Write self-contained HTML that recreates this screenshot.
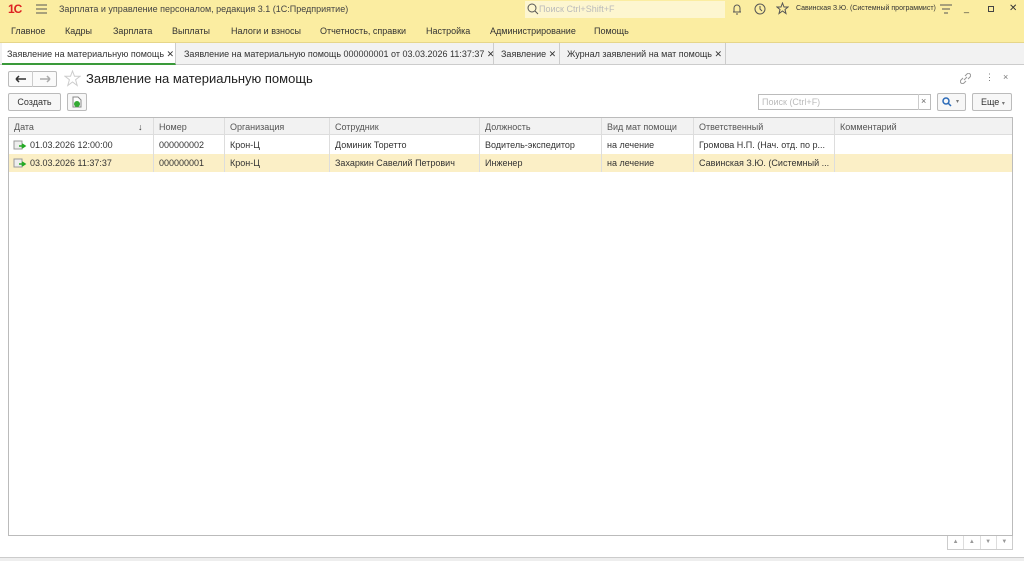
<!DOCTYPE html>
<html><head><meta charset="utf-8"><style>
*{box-sizing:border-box;margin:0;padding:0}
body{width:1024px;height:561px;overflow:hidden;background:#fff;font-family:"Liberation Sans",sans-serif;font-size:9px;color:#333;position:relative}
.a{position:absolute;white-space:nowrap}
svg{position:absolute}
</style></head><body>
<div class="a" style="left:0;top:0;width:1024px;height:19px;background:#fbeda1"></div>
<div class="a" style="left:8px;top:2px;color:#d22;font-weight:bold;font-size:12px;letter-spacing:-1px">1С</div>
<svg style="left:36px;top:4px" width="12" height="10"><path d="M0 1H11M0 5H11M0 9H11" stroke="#555" stroke-width="1"/></svg>
<div class="a" style="left:59px;top:4px;color:#444">Зарплата и управление персоналом, редакция 3.1  (1С:Предприятие)</div>
<div class="a" style="left:525px;top:1px;width:200px;height:17px;background:#fdf6d0"></div>
<div class="a" style="left:539px;top:4px;color:#bbb">Поиск Ctrl+Shift+F</div>
<svg style="left:527px;top:3px" width="12" height="12"><circle cx="5" cy="5" r="4" fill="none" stroke="#555"/><path d="M8 8L11 11" stroke="#555"/></svg>
<svg style="left:731px;top:3px" width="12" height="12"><path d="M2 9H10M3 9V5A3 3 0 0 1 9 5V9M5 11H7" fill="none" stroke="#555"/></svg>
<svg style="left:754px;top:3px" width="12" height="12"><circle cx="6" cy="6" r="5" fill="none" stroke="#555"/><path d="M6 3V6L8 8" fill="none" stroke="#555"/></svg>
<svg style="left:776px;top:2px" width="13" height="13"><path d="M6.5 1L8 5H12L9 7.5L10 11.5L6.5 9L3 11.5L4 7.5L1 5H5Z" fill="none" stroke="#555"/></svg>
<div class="a" style="left:796px;top:5px;font-size:7px">Савинская З.Ю. (Системный программист)</div>
<svg style="left:940px;top:4px" width="13" height="10"><path d="M0 1H12M2 5H10M4 9H8" stroke="#555"/></svg>
<div class="a" style="left:964px;top:3px">_</div>
<div class="a" style="left:988px;top:6px;width:6px;height:6px;border:1px solid #444"></div>
<div class="a" style="left:1009px;top:3px;font-size:10px">✕</div>
<div class="a" style="left:0;top:19px;width:1024px;height:24px;background:#fbeda1;border-bottom:1px solid #e6d68a"></div>
<div class="a" style="left:11px;top:26px">Главное</div>
<div class="a" style="left:65px;top:26px">Кадры</div>
<div class="a" style="left:113px;top:26px">Зарплата</div>
<div class="a" style="left:172px;top:26px">Выплаты</div>
<div class="a" style="left:231px;top:26px">Налоги и взносы</div>
<div class="a" style="left:320px;top:26px">Отчетность, справки</div>
<div class="a" style="left:426px;top:26px">Настройка</div>
<div class="a" style="left:490px;top:26px">Администрирование</div>
<div class="a" style="left:594px;top:26px">Помощь</div>
<div class="a" style="left:0;top:43px;width:1024px;height:22px;background:#f2f2f2;border-bottom:1px solid #ccc"></div>
<div class="a" style="left:2px;top:43px;width:174px;height:22px;background:#fff;border-bottom:2px solid #3a9a3a;border-right:1px solid #ccc"></div>
<div class="a" style="left:7px;top:49px">Заявление на материальную помощь ✕</div>
<div class="a" style="left:176px;top:43px;width:318px;height:22px;border-right:1px solid #ccc"></div>
<div class="a" style="left:184px;top:49px">Заявление на материальную помощь 000000001 от 03.03.2026 11:37:37 ✕</div>
<div class="a" style="left:494px;top:43px;width:66px;height:22px;border-right:1px solid #ccc"></div>
<div class="a" style="left:501px;top:49px">Заявление ✕</div>
<div class="a" style="left:560px;top:43px;width:166px;height:22px;border-right:1px solid #ccc"></div>
<div class="a" style="left:567px;top:49px">Журнал заявлений на мат помощь ✕</div>
<div class="a" style="left:8px;top:71px;width:49px;height:16px;border:1px solid #bbb;border-radius:2px;background:#fafafa"></div>
<div class="a" style="left:32px;top:71px;width:1px;height:16px;background:#ccc"></div>
<svg style="left:15px;top:75px" width="12" height="8"><path d="M1 4H11M1 4L4 1M1 4L4 7" fill="none" stroke="#333" stroke-width="1.5"/></svg>
<svg style="left:39px;top:75px" width="12" height="8"><path d="M1 4H11M11 4L8 1M11 4L8 7" fill="none" stroke="#aaa" stroke-width="1.5"/></svg>
<svg style="left:64px;top:70px" width="17" height="17"><path d="M8.5 1L10.5 6.3H16L11.6 9.7L13.2 15.5L8.5 12L3.8 15.5L5.4 9.7L1 6.3H6.5Z" fill="none" stroke="#ccc"/></svg>
<div class="a" style="left:86px;top:71px;font-size:13px;color:#222">Заявление на материальную помощь</div>
<svg style="left:960px;top:73px" width="11" height="11"><path d="M4 7L7 4M5 3L7 1A2 2 0 0 1 10 4L8 6M6 8L4 10A2 2 0 0 1 1 7L3 5" fill="none" stroke="#999"/></svg>
<div class="a" style="left:985px;top:72px;color:#777">⋮</div>
<div class="a" style="left:1003px;top:72px;color:#777">×</div>
<div class="a" style="left:8px;top:93px;width:53px;height:18px;border:1px solid #bbb;border-radius:2px;background:#f7f7f7;text-align:center;line-height:16px">Создать</div>
<div class="a" style="left:67px;top:93px;width:20px;height:18px;border:1px solid #bbb;border-radius:2px;background:#f7f7f7"></div>
<svg style="left:72px;top:96px" width="11" height="12"><path d="M1 1H6L9 4V11H1Z" fill="#fff" stroke="#888"/><circle cx="5" cy="8" r="3" fill="#3a3"/></svg>
<div class="a" style="left:758px;top:94px;width:173px;height:16px;border:1px solid #bbb"></div>
<div class="a" style="left:918px;top:94px;width:1px;height:16px;background:#ccc"></div>
<div class="a" style="left:762px;top:97px;color:#bbb">Поиск (Ctrl+F)</div>
<div class="a" style="left:921px;top:96px;color:#666">×</div>
<div class="a" style="left:937px;top:93px;width:29px;height:18px;border:1px solid #bbb;border-radius:2px;background:#f7f7f7"></div>
<svg style="left:942px;top:97px" width="10" height="10"><circle cx="4" cy="4" r="3" fill="none" stroke="#2a6ab8" stroke-width="1.5"/><path d="M6 6L9 9" stroke="#2a6ab8" stroke-width="1.5"/></svg>
<div class="a" style="left:956px;top:98px;font-size:6px;color:#777">▾</div>
<div class="a" style="left:972px;top:93px;width:40px;height:18px;border:1px solid #bbb;border-radius:2px;background:#f7f7f7;padding:3px 8px">Еще <span style="font-size:6px;color:#777">▾</span></div>
<div class="a" style="left:8px;top:117px;width:1005px;height:419px;border:1px solid #bbb"></div>
<div class="a" style="left:9px;top:118px;width:1003px;height:17px;background:#f2f2f2;border-bottom:1px solid #ddd"></div>
<div class="a" style="left:9px;top:154px;width:1003px;height:18px;background:#fbefc6"></div>
<div class="a" style="left:153px;top:118px;width:1px;height:54px;background:#ddd"></div>
<div class="a" style="left:224px;top:118px;width:1px;height:54px;background:#ddd"></div>
<div class="a" style="left:329px;top:118px;width:1px;height:54px;background:#ddd"></div>
<div class="a" style="left:479px;top:118px;width:1px;height:54px;background:#ddd"></div>
<div class="a" style="left:601px;top:118px;width:1px;height:54px;background:#ddd"></div>
<div class="a" style="left:693px;top:118px;width:1px;height:54px;background:#ddd"></div>
<div class="a" style="left:834px;top:118px;width:1px;height:54px;background:#ddd"></div>
<div class="a" style="left:14px;top:122px;color:#555">Дата</div><div class="a" style="left:138px;top:122px">↓</div>
<div class="a" style="left:159px;top:122px;color:#555">Номер</div>
<div class="a" style="left:230px;top:122px;color:#555">Организация</div>
<div class="a" style="left:335px;top:122px;color:#555">Сотрудник</div>
<div class="a" style="left:485px;top:122px;color:#555">Должность</div>
<div class="a" style="left:607px;top:122px;color:#555">Вид мат помощи</div>
<div class="a" style="left:699px;top:122px;color:#555">Ответственный</div>
<div class="a" style="left:840px;top:122px;color:#555">Комментарий</div>
<svg style="left:13px;top:140px" width="14" height="11"><path d="M1 1H9V9H1Z" fill="#eee" stroke="#999"/><path d="M6 6H11M9 4L12 6L9 8" fill="none" stroke="#2a2" stroke-width="1.5"/></svg>
<svg style="left:13px;top:158px" width="14" height="11"><path d="M1 1H9V9H1Z" fill="#eee" stroke="#999"/><path d="M6 6H11M9 4L12 6L9 8" fill="none" stroke="#2a2" stroke-width="1.5"/></svg>
<div class="a" style="left:30px;top:140px">01.03.2026 12:00:00</div>
<div class="a" style="left:159px;top:140px">000000002</div>
<div class="a" style="left:230px;top:140px">Крон-Ц</div>
<div class="a" style="left:335px;top:140px">Доминик Торетто</div>
<div class="a" style="left:485px;top:140px">Водитель-экспедитор</div>
<div class="a" style="left:607px;top:140px">на лечение</div>
<div class="a" style="left:699px;top:140px">Громова Н.П. (Нач. отд. по р...</div>
<div class="a" style="left:30px;top:158px">03.03.2026 11:37:37</div>
<div class="a" style="left:159px;top:158px">000000001</div>
<div class="a" style="left:230px;top:158px">Крон-Ц</div>
<div class="a" style="left:335px;top:158px">Захаркин Савелий Петрович</div>
<div class="a" style="left:485px;top:158px">Инженер</div>
<div class="a" style="left:607px;top:158px">на лечение</div>
<div class="a" style="left:699px;top:158px">Савинская З.Ю. (Системный ...</div>
<div class="a" style="left:947px;top:536px;width:66px;height:14px;border:1px solid #ccc;border-top:none;display:flex;font-size:6px;color:#999">
<div style="flex:1;text-align:center;border-right:1px solid #ddd;line-height:13px">▲</div><div style="flex:1;text-align:center;border-right:1px solid #ddd;line-height:13px">▲</div><div style="flex:1;text-align:center;border-right:1px solid #ddd;line-height:13px">▼</div><div style="flex:1;text-align:center;line-height:13px">▼</div></div>
<div class="a" style="left:0;top:557px;width:1024px;height:4px;background:#eee;border-top:1px solid #ccc"></div>
</body></html>
